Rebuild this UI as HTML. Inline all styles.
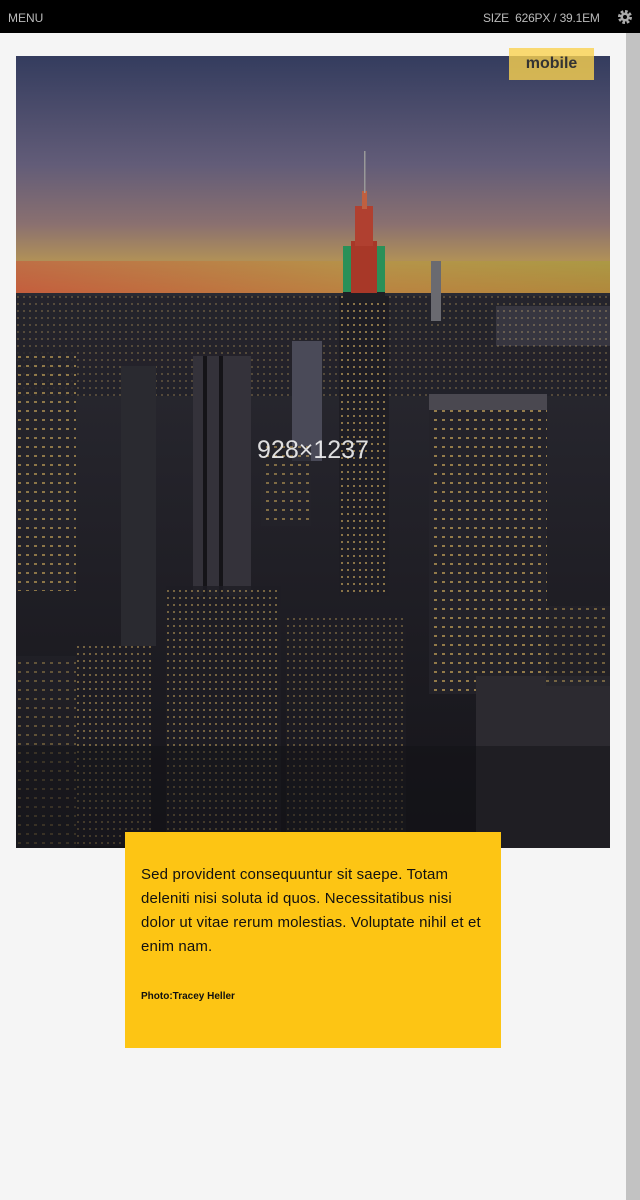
<!DOCTYPE html>
<html><head><meta charset="utf-8"><style>
*{margin:0;padding:0;box-sizing:border-box}
body{width:640px;height:1200px;background:#f5f5f5;font-family:"Liberation Sans",sans-serif;position:relative;overflow:hidden}
.top{position:absolute;left:0;top:0;width:640px;height:33px;background:#000;color:#bbb;font-size:12px}
.top .m{position:absolute;left:8px;top:11px}
.top .s{position:absolute;left:483px;top:11px;letter-spacing:-.2px}
.sb{position:absolute;left:626px;top:33px;width:14px;height:1167px;background:#c2c2c2}
.img{position:absolute;left:16px;top:56px;width:594px;height:792px;overflow:hidden}
.badge{position:absolute;left:509px;top:48px;width:85px;height:32px;background:rgba(250,210,80,.8);color:#333;font-weight:bold;font-size:16px;text-align:center;line-height:31px}
.lbl{position:absolute;left:0;width:594px;top:380px;text-align:center;color:rgba(255,255,255,.85);font-size:25px}
.box{position:absolute;left:125px;top:832px;width:376px;height:216px;background:#fdc514;padding:31px 18px 0 16px;color:#111}
.box p{font-size:15px;line-height:24px;letter-spacing:.15px}
.box .c{font-size:10px;font-weight:bold;margin-top:26px;letter-spacing:0}
</style></head><body>
<div class="top"><span class="m">MENU</span><span class="s">SIZE &nbsp;626PX / 39.1EM</span>
<svg style="position:absolute;left:617px;top:9px" width="16" height="16" viewBox="0 0 16 16"><circle cx="8" cy="8" r="5.5" fill="none" stroke="#aaa" stroke-width="3" stroke-dasharray="2.6 1.7"/><circle cx="8" cy="8" r="4.5" fill="#aaa"/><circle cx="8" cy="8" r="2" fill="#000"/></svg></div>
<div class="sb"></div>
<div class="img">
<svg width="594" height="792" viewBox="0 0 594 792">
<defs>
<linearGradient id="sky" x1="0" y1="0" x2="0" y2="1">
<stop offset="0" stop-color="#343c5e"/><stop offset=".45" stop-color="#625c78"/><stop offset=".7" stop-color="#8a7070"/><stop offset=".85" stop-color="#b09058"/><stop offset="1" stop-color="#c06040"/></linearGradient>
<linearGradient id="hz" x1="0" y1="0" x2="1" y2="0"><stop offset="0" stop-color="#c85a3a"/><stop offset=".6" stop-color="#b89840"/><stop offset="1" stop-color="#a8a038"/></linearGradient>
<linearGradient id="city" x1="0" y1="0" x2="0" y2="1"><stop offset="0" stop-color="#2a2a32"/><stop offset=".4" stop-color="#222128"/><stop offset="1" stop-color="#151419"/></linearGradient>
<pattern id="win" width="6" height="7" patternUnits="userSpaceOnUse"><rect width="6" height="7" fill="#1e1d24"/><rect x="1" y="2" width="2" height="2" fill="#8a7448"/></pattern>
<pattern id="win2" width="8" height="9" patternUnits="userSpaceOnUse"><rect width="8" height="9" fill="#24232a"/><rect x="2" y="3" width="3" height="2" fill="#a88c50"/></pattern>
</defs>
<rect width="594" height="240" fill="url(#sky)"/>
<rect y="205" width="594" height="34" fill="url(#hz)" opacity=".6"/>
<rect y="237" width="594" height="555" fill="url(#city)"/>
<rect x="480" y="250" width="114" height="40" fill="#5a5868" opacity=".7"/>
<rect y="240" width="594" height="100" fill="url(#win)" opacity=".45"/>
<rect x="0" y="295" width="60" height="240" fill="url(#win2)" opacity=".8"/>
<rect x="105" y="310" width="35" height="280" fill="#2a2a30"/>
<rect x="177" y="300" width="58" height="240" fill="#34323a"/>
<rect x="187" y="300" width="4" height="240" fill="#151418"/><rect x="203" y="300" width="4" height="240" fill="#151418"/>
<rect x="276" y="285" width="30" height="120" fill="#4a4a58"/>
<rect x="323" y="240" width="50" height="300" fill="url(#win)"/>
<rect x="327" y="190" width="42" height="56" fill="#1f1f24"/>
<rect x="327" y="190" width="8" height="46" fill="#2a9058"/><rect x="361" y="190" width="8" height="46" fill="#2a9058"/>
<rect x="335" y="185" width="26" height="52" fill="#a83828"/>
<rect x="339" y="150" width="18" height="40" fill="#b04030"/>
<rect x="346" y="135" width="5" height="18" fill="#c06040"/>
<rect x="348" y="95" width="1.5" height="42" fill="#999"/>
<rect x="415" y="205" width="10" height="60" fill="#6a6a70"/>
<rect x="413" y="338" width="118" height="300" fill="url(#win2)" opacity=".85"/>
<rect x="413" y="338" width="118" height="16" fill="#4a4850"/>
<rect x="245" y="390" width="50" height="80" fill="url(#win2)" opacity=".7"/>
<rect x="150" y="530" width="115" height="260" fill="url(#win)" opacity=".8"/>
<rect x="60" y="590" width="75" height="200" fill="url(#win)" opacity=".8"/>
<rect x="270" y="560" width="120" height="232" fill="url(#win)" opacity=".6"/>
<rect x="460" y="620" width="134" height="172" fill="#2c2a30"/>
<rect x="530" y="550" width="64" height="80" fill="url(#win2)" opacity=".6"/>
<rect x="0" y="600" width="60" height="192" fill="url(#win2)" opacity=".5"/>
<rect y="690" width="594" height="102" fill="#121116" opacity=".5"/>
</svg>
<div class="lbl">928×1237</div>
</div>
<div class="badge">mobile</div>
<div class="box"><p>Sed provident consequuntur sit saepe. Totam deleniti nisi soluta id quos. Necessitatibus nisi dolor ut vitae rerum molestias. Voluptate nihil et et enim nam.</p><p class="c">Photo:Tracey Heller</p></div>
</body></html>
